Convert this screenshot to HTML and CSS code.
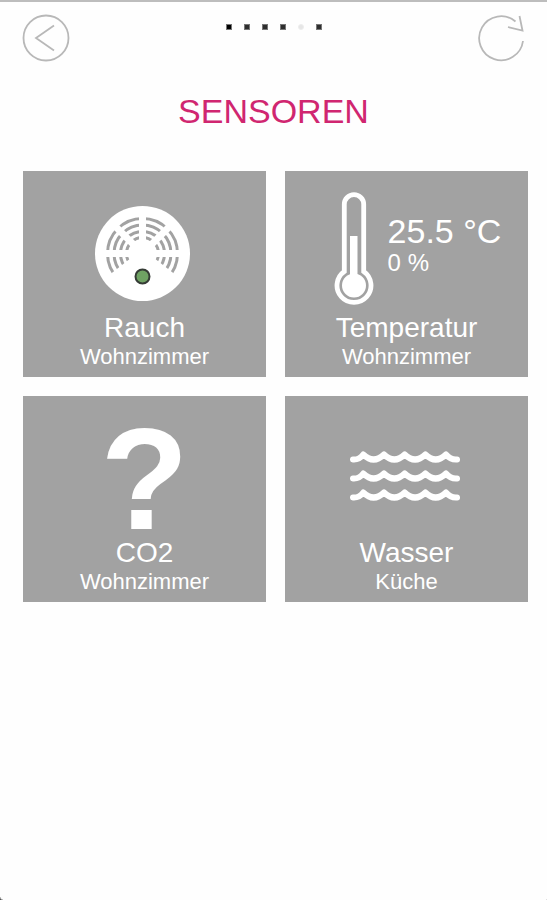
FILE: index.html
```html
<!DOCTYPE html>
<html lang="de">
<head>
<meta charset="utf-8">
<meta name="viewport" content="width=device-width, initial-scale=1">
<title>Sensoren</title>
<link rel="stylesheet" href="styles.css">
</head>
<body>
<header class="topbar">
  <button class="icon-button" type="button" aria-label="Zurück">
    <svg viewBox="0 0 48 48"><circle cx="24" cy="24" r="22.500"/><path d="M32 11.500 14 24 32 36.500"/></svg>
  </button>
  <nav class="pages" aria-label="Seiten">
    <span class="dot"></span><span class="dot"></span><span class="dot"></span><span class="dot"></span><span class="dot dot-current"></span><span class="dot"></span>
  </nav>
  <button class="icon-button" type="button" aria-label="Aktualisieren">
    <svg viewBox="0 0 48 48"><path d="M38.500 7.500A22 22 0 1 0 46 27"/><path d="M42.500 2 45.500 16.500 31 13"/></svg>
  </button>
</header>
<main>
  <h1 class="title">SENSOREN</h1>
  <div class="grid">
    <article class="tile">
      <div class="visual">
        <svg class="smoke" viewBox="0 0 100 100" aria-hidden="true">
          <circle class="fill" cx="47.500" cy="51.500" r="47.500"/>
          <g class="vents">
            <circle cx="47.500" cy="51.500" r="35"/><circle cx="47.500" cy="51.500" r="28.500"/><circle cx="47.500" cy="51.500" r="22"/><circle cx="47.500" cy="51.500" r="16"/>
          </g>
          <path class="spokes" d="M47.500 12V52M10 51.500H86M19.500 23.500 47.500 51.500 75.500 23.500"/>
          <path class="fill" d="M47.500 47 11 75.500 30 92H66L84 75.500Z"/>
          <circle class="led" cx="47.500" cy="74.500" r="7"/>
        </svg>
      </div>
      <h2 class="name">Rauch</h2>
      <p class="room">Wohnzimmer</p>
    </article>
    <article class="tile">
      <div class="visual reading">
        <svg class="thermometer" viewBox="334 191 40 116" aria-hidden="true">
          <path class="outline" d="M344.300 271.500V204.300a9.700 9.700 0 0 1 19.400 0V271.500A17 17 0 1 1 344.300 271.500Z"/>
          <circle class="fill" cx="354" cy="285.500" r="12"/>
          <path class="fill" d="M350 236h7.500v42H350z"/>
        </svg>
        <div class="values">
          <p class="temperature">25.5 °C</p>
          <p class="humidity">0 %</p>
        </div>
      </div>
      <h2 class="name">Temperatur</h2>
      <p class="room">Wohnzimmer</p>
    </article>
    <article class="tile">
      <div class="visual"><span class="unknown">?</span></div>
      <h2 class="name">CO2</h2>
      <p class="room">Wohnzimmer</p>
    </article>
    <article class="tile">
      <div class="visual">
        <svg class="water" viewBox="350 446 114 60" aria-hidden="true">
          <path d="M353 458.500Q359 459 363.300 453.500Q373.600 463.500 384 453.500Q394.300 463.500 404.700 453.500Q415 463.500 425.400 453.500Q435.700 463.500 446 453.500Q450.500 459 457 458.500"/>
          <path d="M353 477.500Q359 478 363.300 472.500Q373.600 482.500 384 472.500Q394.300 482.500 404.700 472.500Q415 482.500 425.400 472.500Q435.700 482.500 446 472.500Q450.500 478 457 477.500"/>
          <path d="M353 496.500Q359 497 363.300 491.500Q373.600 501.500 384 491.500Q394.300 501.500 404.700 491.500Q415 501.500 425.400 491.500Q435.700 501.500 446 491.500Q450.500 497 457 496.500"/>
        </svg>
      </div>
      <h2 class="name">Wasser</h2>
      <p class="room">Küche</p>
    </article>
  </div>
</main>
</body>
</html>
```
FILE: styles.css
```css
* { box-sizing: border-box; }

body {
  position: relative;
  min-height: 100vh;
  margin: 0;
  border-top: 2px solid #bdbdbd;
  background: #fefefe;
  font-family: "Liberation Sans", Arial, sans-serif;
}

/* Rounded screen corners */
body::before,
body::after {
  content: "";
  position: absolute;
  bottom: 0;
  width: 3px;
  height: 3px;
}
body::before { left: 0; background: radial-gradient(circle at 100% 0, transparent 2px, #222 4px); }
body::after { right: 0; background: radial-gradient(circle at 0 0, transparent 3px, #888 5px); }

h1, h2, p { margin: 0; font-weight: 400; }
svg { display: block; }

.topbar {
  display: flex;
  justify-content: space-between;
  align-items: flex-start;
  padding: 12px 22px 0;
}
.icon-button {
  width: 48px;
  height: 48px;
  padding: 0;
  border: 0;
  background: none;
}
.icon-button svg {
  width: 48px;
  height: 48px;
  fill: none;
  stroke: #b8b8b8;
  stroke-width: 1.8;
}
.pages { display: flex; gap: 12px; padding-top: 10px; }
.dot { width: 6px; height: 6px; background: #2e2e2e; border: 1px solid #777; }
.dot:first-child { background: #000; }
.dot-current { background: #e6e6e6; border-color: #eee; border-radius: 3px; }

.title {
  margin: 29px 0 40px;
  color: #d02670;
  font-size: 34px;
  line-height: 40px;
  text-align: center;
}

.grid {
  display: grid;
  grid-template-columns: 1fr 1fr;
  gap: 19px;
  padding: 0 19px 19px 23px;
}
.tile {
  padding: 20px 0 7px;
  background: #a2a2a2;
  color: #fff;
  text-align: center;
}
.visual {
  display: flex;
  justify-content: center;
  align-items: center;
  height: 121px;
}
.name { font-size: 28px; line-height: 32px; }
.room { font-size: 22px; line-height: 26px; }

.fill { fill: #fff; }
.smoke { width: 100px; height: 100px; }
.vents { fill: none; stroke: #a2a2a2; stroke-width: 3; }
.spokes { fill: none; stroke: #fff; stroke-width: 7; }
.led { fill: #6fa263; stroke: #353b35; stroke-width: 2; }

.reading { align-items: flex-start; gap: 14px; padding-left: 22px; }
.thermometer { width: 40px; height: 116px; }
.outline { fill: none; stroke: #fff; stroke-width: 4.8; }
.values { padding-top: 20px; text-align: left; }
.temperature { font-size: 34px; line-height: 40px; }
.humidity { font-size: 24px; line-height: 24px; }

.unknown { padding-top: 6px; font-size: 144px; font-weight: 700; line-height: 120px; }

.water { width: 114px; height: 60px; }
.water path { fill: none; stroke: #fff; stroke-width: 6; stroke-linecap: round; stroke-linejoin: round; }
```
